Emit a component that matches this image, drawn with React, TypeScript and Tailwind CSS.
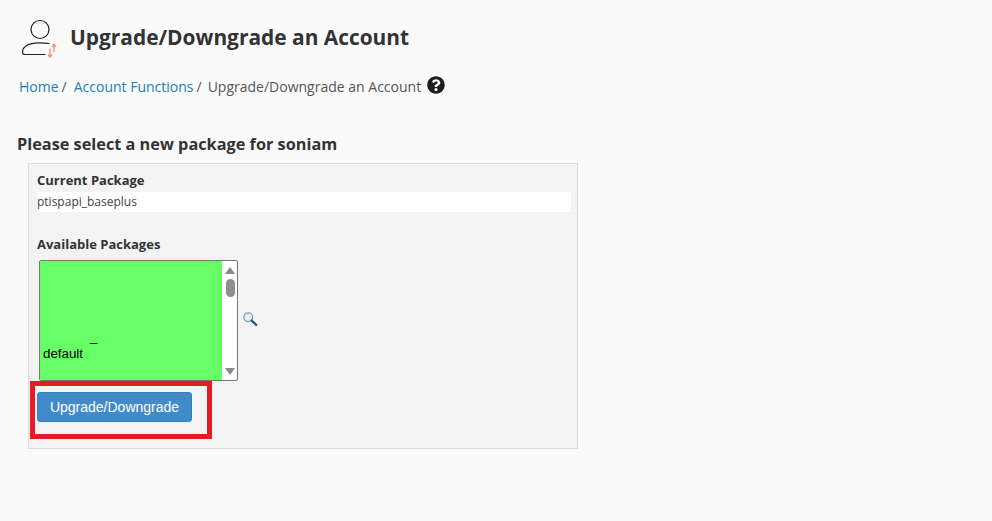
import React from 'react';
import { FaQuestionCircle } from 'react-icons/fa';

const AccountIcon = () => (
  <svg width="40" height="40" viewBox="0 0 40 40" fill="none" className="mt-px shrink-0">
    <circle cx="20" cy="11.5" r="9" stroke="#222" strokeWidth="1.2" />
    <path d="M29 25.5C27 25 25 24.8 19 24.8C8 24.8 2.5 29 2.5 34C2.5 36 3.5 36.5 5 36.5H25" stroke="#222" strokeWidth="1.2" strokeLinecap="round" />
    <path d="M34 34V26.5M32 28.8L34 26L36 28.8" stroke="#f0936c" strokeWidth="1.3" />
    <path d="M30 30.5V39M28 36.5L30 39.3L32 36.5" stroke="#f0936c" strokeWidth="1.3" />
  </svg>
);

const MagnifierIcon = () => (
  <svg width="16" height="16" viewBox="0 0 18 18" fill="none" className="mb-[3px]">
    <circle cx="7" cy="7" r="5" fill="#e4eef6" stroke="#7f9db5" strokeWidth="1.4" />
    <path d="M10.8 10.8L16 15.6" stroke="#1d5c8f" strokeWidth="2.6" strokeLinecap="round" />
  </svg>
);

const PackageList = () => (
  <div className="flex h-[121px] w-[199px] border border-[#767676] bg-white rounded-[2px] overflow-hidden">
    <div className="relative w-[182px] bg-[#66ff66] font-['Liberation_Sans',sans-serif] text-[13.33px] text-black">
      <span className="absolute left-[3px] top-[83px]">default</span>
      <span className="absolute left-[50px] top-[66px]">_</span>
    </div>
    <div className="flex flex-1 flex-col items-center justify-between pl-px pt-[6px] pb-[5px]">
      <div className="flex flex-col items-center gap-[5px]">
        <div className="h-0 w-0 border-x-[5px] border-b-[7px] border-x-transparent border-b-[#8a8a8a]" />
        <div className="h-[18px] w-[9px] rounded-full bg-[#8f8f8f]" />
      </div>
      <div className="h-0 w-0 border-x-[5px] border-t-[7px] border-x-transparent border-t-[#8a8a8a]" />
    </div>
  </div>
);

export default function App() {
  return (
    <div className="min-h-[521px] bg-[#fafafa] font-['Open_Sans',sans-serif] text-[#333]">
      <div className="flex items-start gap-[10px] pl-[20px] pt-[17px]">
        <AccountIcon />
        <h1 className="text-[20.9px] leading-[40px] font-bold">Upgrade/Downgrade an Account</h1>
      </div>

      <div className="mt-[18px] flex items-center pl-[19px] text-[14px] leading-[20px]">
        <a className="text-[#1b7fb9]">Home</a>
        <span className="ml-[3px] mr-[7px] text-[#555]">/</span>
        <a className="text-[#1b7fb9]">Account Functions</a>
        <span className="ml-[3px] mr-[6px] text-[#555]">/</span>
        <span className="text-[#555]">Upgrade/Downgrade an Account</span>
        <FaQuestionCircle className="ml-[6px] mb-[3px] text-[18px] text-[#1c1c1c]" />
      </div>

      <h2 className="mt-[36px] pl-[17px] text-[16.3px] leading-[22px] font-bold">Please select a new package for soniam</h2>

      <div className="relative ml-[28px] mt-[8px] h-[286px] w-[550px] border border-[#dcdcdc] bg-[#f3f3f3] px-[8px] pt-[6px]">
        <div className="text-[13px] leading-[20px] font-bold">Current Package</div>
        <div className="mt-[2px] h-[20px] w-[534px] bg-white text-[12px] leading-[19px] text-[#444]">ptispapi_baseplus</div>
        <div className="mt-[22px] text-[13px] leading-[20px] font-bold">Available Packages</div>
        <div className="mt-[6px] ml-[2px] flex items-center gap-[4px]">
          <PackageList />
          <MagnifierIcon />
        </div>
        <button className="mt-[11px] block h-[30px] w-[155px] rounded-[3px] border border-[#3a7fbb] bg-[#428bca] font-['Liberation_Sans',sans-serif] text-[14px] text-white">
          Upgrade/Downgrade
        </button>
        <div className="absolute left-[1px] top-[217px] h-[58px] w-[182px] border-[5px] border-[#e51c23]" />
      </div>
    </div>
  );
}
